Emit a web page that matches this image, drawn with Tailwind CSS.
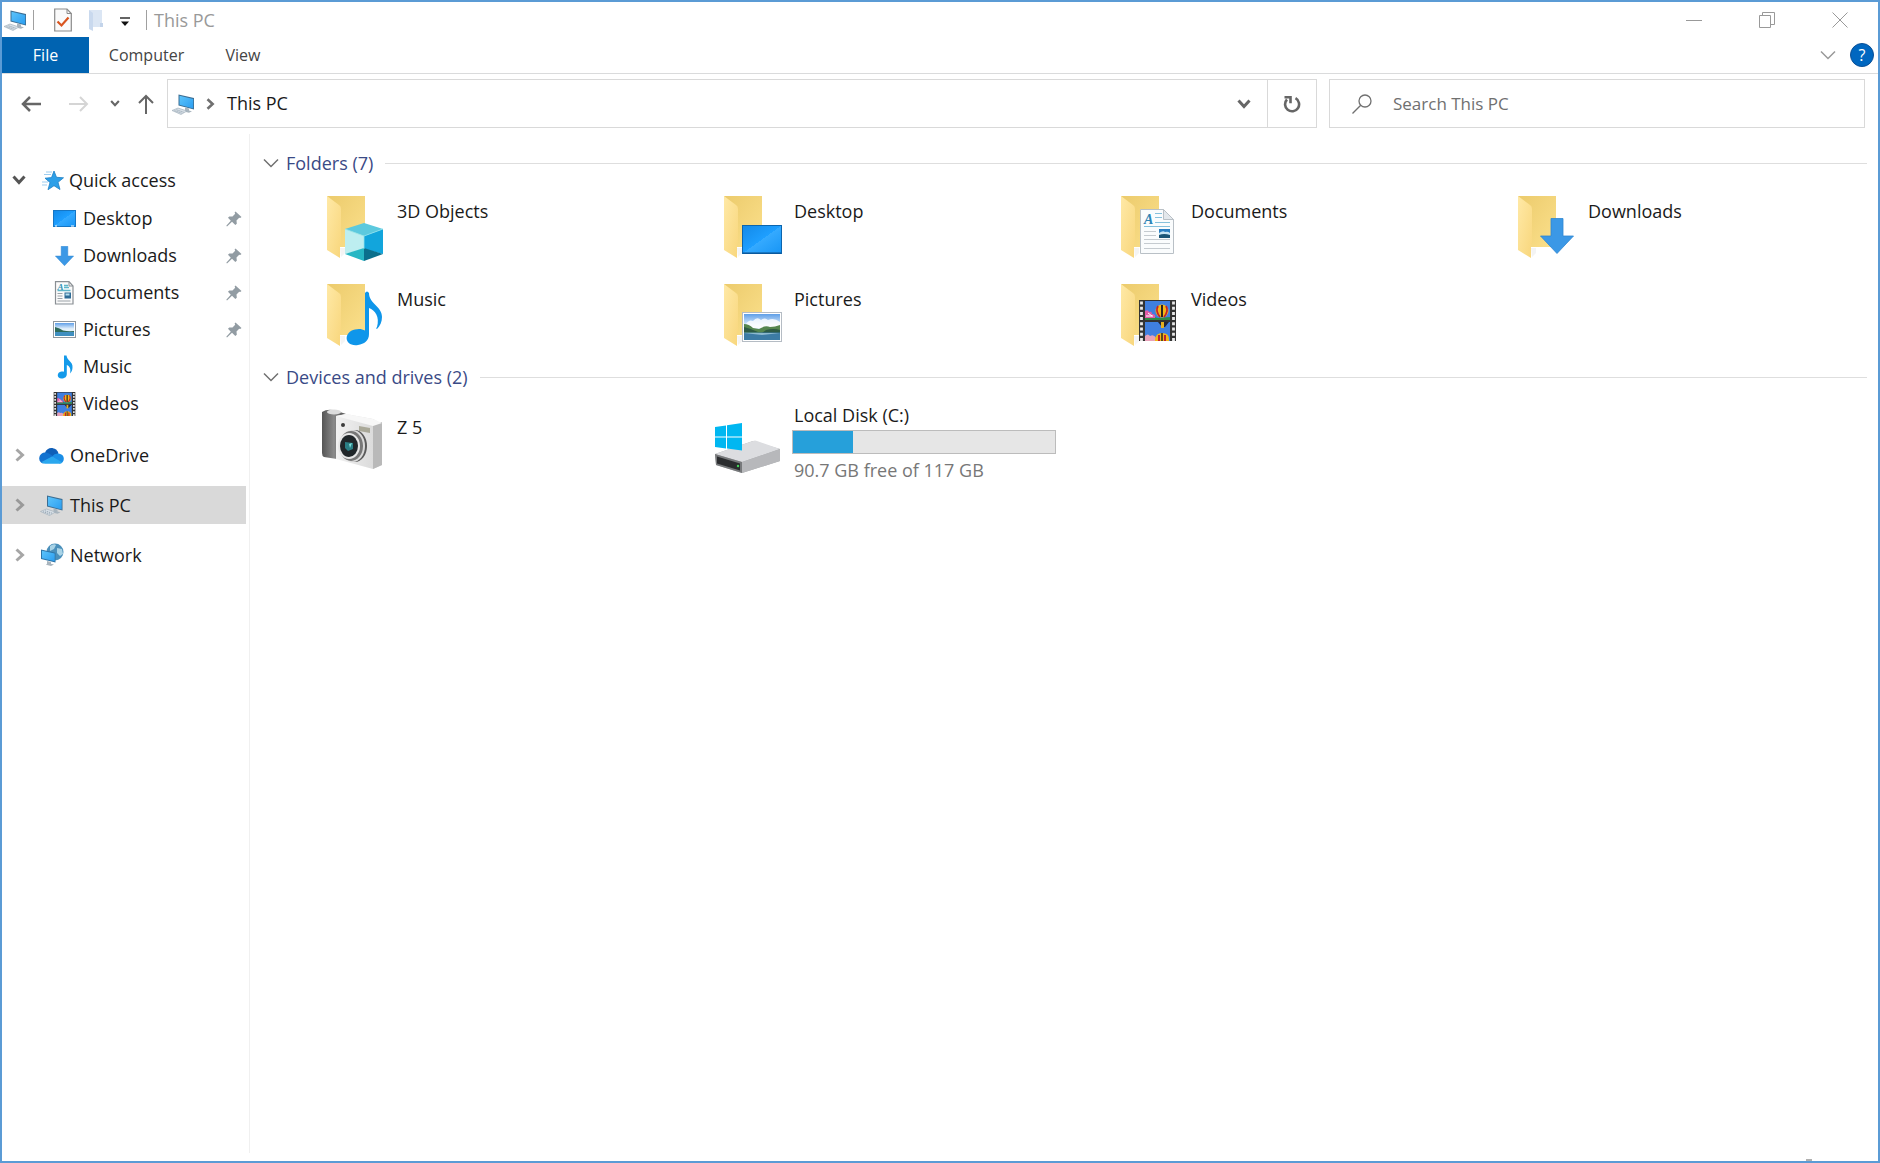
<!DOCTYPE html>
<html lang="en">

<head>
  <meta charset="UTF-8" />
  <meta name="viewport" content="width=device-width, initial-scale=1" />
  <title>This PC</title>
  <script src="https://cdn.jsdelivr.net/npm/@tailwindcss/browser@4"></script>
</head>

<body class="font-['Open_Sans','Noto_Sans',sans-serif] min-h-screen flex flex-col bg-white border-2 border-[#5b9bd5] text-[#1a1a1a]">

  <!-- Shared icons -->
  <svg class="absolute size-0" aria-hidden="true">
    <defs>
      <linearGradient id="g-back" x1="0" y1="0" x2="1" y2="1">
        <stop offset="0" stop-color="#eccb6c" /><stop offset="1" stop-color="#fbe08c" />
      </linearGradient>
      <linearGradient id="g-flap" x1="0" y1="0" x2="1" y2="1">
        <stop offset="0" stop-color="#ffe9a6" /><stop offset="1" stop-color="#f8d67c" />
      </linearGradient>
      <linearGradient id="g-screen" x1="0" y1="0" x2="1" y2="1">
        <stop offset="0" stop-color="#1389e8" /><stop offset=".5" stop-color="#1e9fff" /><stop offset=".5" stop-color="#35aaff" /><stop offset="1" stop-color="#1795f5" />
      </linearGradient>
      <linearGradient id="g-pc" x1="0" y1="0" x2="1" y2="1">
        <stop offset="0" stop-color="#5cc4fb" /><stop offset="1" stop-color="#2b9df0" />
      </linearGradient>
      <linearGradient id="g-sky" x1="0" y1="0" x2="0" y2="1">
        <stop offset="0" stop-color="#5f9fe8" /><stop offset=".45" stop-color="#e4f1fb" />
      </linearGradient>
      <linearGradient id="g-grip">
        <stop offset="0" stop-color="#555" /><stop offset=".5" stop-color="#8a8a8a" /><stop offset="1" stop-color="#4c4c4c" />
      </linearGradient>
      <linearGradient id="g-body">
        <stop offset="0" stop-color="#f1f1f1" /><stop offset="1" stop-color="#d6d6d6" />
      </linearGradient>
    </defs>
    <symbol id="folder" viewBox="0 0 64 72">
      <path d="M6 4H44V55H19Z" fill="url(#g-back)" />
      <path d="M19 56h5v5l-4 4z" fill="#f4f4f4" />
      <path d="M6 4l12 9q2 1 2 4v32q0 2-1 4v13L6 58z" fill="url(#g-flap)" />
    </symbol>
    <symbol id="pc" viewBox="0 0 24 24">
      <path d="M7.500 2.500L23 6V17.500L7.500 13.500z" fill="#3b6d92" />
      <path d="M8.500 3.700L22.200 6.900V16.400L8.500 12.800z" fill="url(#g-pc)" />
      <path d="M14 15.500l4 1v2l3 .8-3 1.500-5-1.300 1-.8z" fill="#a9b5be" />
      <path d="M1 18.500L7 16l9 3-6 3.500z" fill="#d7dfe6" stroke="#9aa9b5" stroke-width=".6" />
      <path d="M3.500 18.700l7 2.400M5.500 17.800l7 2.400" stroke="#8a9aa8" stroke-width=".8" stroke-dasharray="1.300 .8" />
    </symbol>
    <symbol id="landscape" viewBox="0 0 40 30">
      <rect x=".5" y=".5" width="39" height="29" fill="#fff" stroke="#b5bcc4" />
      <rect x="2" y="2" width="36" height="26" fill="url(#g-sky)" />
      <path d="M4 12q3-5 7-3 4-5 8-1 4-3 7 0 6-3 12 2v6H4z" fill="#fff" opacity=".8" />
      <path d="M2 12q5 0 9 4l6 1q6-4 11-2 5 0 10-2v9H2z" fill="#55864f" />
      <path d="M2 15q8 2 14 5H2zM24 18q8-2 14 0v3H20z" fill="#2d5a44" />
      <rect x="2" y="20.500" width="36" height="7.500" fill="#3c7ba4" />
      <path d="M2 21h36l-18 2z" fill="#8db9cf" />
    </symbol>
    <symbol id="film" viewBox="0 0 37 41">
      <rect width="37" height="41" fill="#333" />
      <path d="M2.500 1.500V41M34.500 1.500V41" stroke="#e9e9e9" stroke-width="2.800" stroke-dasharray="3 2.200" />
      <rect x="6" y="1" width="25" height="19" fill="#3f7fe0" />
      <rect x="6" y="22" width="25" height="19" fill="#3f7fe0" />
      <path d="M6 17l5-1 8 2 12-1v3H6z" fill="#2f8a45" />
      <path d="M6 11q3-2 4 1 3-1 3 2 4 0 3 4H6z" fill="#e25ca6" />
      <path d="M9 13l4 3M7 16h7" stroke="#fff" />
      <circle cx="23" cy="11" r="6.500" fill="#f3b616" />
      <path d="M19 6q-3 5 2 11M27 6q3 5-2 11" fill="none" stroke="#c3212c" stroke-width="1.800" />
      <path d="M23 5v12" stroke="#2a2320" stroke-width="2" />
      <path d="M19 22h11l-4 5h-3z" fill="#22243b" />
      <path d="M22 22h3v6h-3z" fill="#e5b021" />
      <path d="M6 36q3-3 5 0 4-2 6 2l1 3H6z" fill="#e8a1b8" />
      <path d="M16 39q1-6 7-6 7 0 7 6v2H16z" fill="#f3b616" />
      <path d="M20 35v6M26 35v6" stroke="#c3212c" stroke-width="2" />
      <path d="M23 33v8" stroke="#2a2320" stroke-width="1.500" />
    </symbol>
    <symbol id="arrow-down" viewBox="0 0 34 36">
      <path d="M11 .500H23V18H33.500L17 35.500.500 18H11z" fill="#3b98e6" stroke="#2f86d0" stroke-width=".8" />
    </symbol>
    <symbol id="pin" viewBox="0 0 16 16">
      <path d="M9.500.500L15.500 6l-1.300 1-1-.3-2.700 2.800.3 3.200-1.500 1.300-3.300-3.300L1 15.500l-.7-.7L4.800 9.800 2 6.800l1.300-1.400 3.200.2L9.200 2.700 8.600 1.500z" fill="#929ca3" />
    </symbol>
    <symbol id="chev" viewBox="0 0 14 10">
      <path d="M1.500 1.500L7 7.500l5.500-6" fill="none" stroke="currentColor" stroke-width="3" />
    </symbol>
    <symbol id="chev-thin" viewBox="0 0 16 10">
      <path d="M1 1.500L8 8.500l7-7" fill="none" stroke="currentColor" stroke-width="1.500" />
    </symbol>
    <symbol id="chev-right" viewBox="0 0 10 14">
      <path d="M1.500 1.500L7.500 7l-6 5.500" fill="none" stroke="currentColor" stroke-width="3" />
    </symbol>
  </svg>

  <!-- Title bar -->
  <header class="flex h-[35px] items-center justify-between">
    <div class="flex items-center">
      <svg class="ml-px size-6"><use href="#pc" /></svg>
      <span class="ml-[6px] h-5 w-px bg-[#a0a0a0]"></span>
      <button class="ml-5 w-[18px]" aria-label="Properties">
        <svg class="h-6 w-[18px]" viewBox="0 0 18 24">
          <path d="M.700 1H13l4.300 4.500V23H.700z" fill="#fafafa" stroke="#8b8b8b" stroke-width="1.200" />
          <path d="M13 1v4.500h4.300" fill="none" stroke="#8b8b8b" />
          <path d="M3.500 13.500l4 4 7-8" fill="none" stroke="#d9541e" stroke-width="2.200" />
        </svg>
      </button>
      <button class="ml-4 w-4" aria-label="New folder">
        <svg class="h-6 w-4" viewBox="0 0 16 24">
          <path d="M1 2h13v17H5z" fill="#dbe6f4" />
          <path d="M1 2l4 3v18l-4-2z" fill="#c9d9ee" />
          <path d="M12 15h3v4h-3z" fill="#c3d4ea" />
        </svg>
      </button>
      <button class="ml-4 w-[10px] pt-1" aria-label="Customize Quick Access Toolbar">
        <svg class="h-[10px] w-[10px]" viewBox="0 0 10 10">
          <path d="M0 1h10" stroke="#222" stroke-width="1.400" />
          <path d="M1 4.500h8L5 9z" fill="#111" />
        </svg>
      </button>
      <span class="ml-4 h-5 w-px bg-[#a0a0a0]"></span>
      <h1 class="ml-[7px] text-[18px] leading-6 text-[#999]">This PC</h1>
    </div>
    <div class="flex items-center pr-[2px] text-[#999]">
      <button class="flex w-[73px] justify-center" aria-label="Minimize">
        <svg class="size-4" viewBox="0 0 16 16"><path d="M0 8.500h16" stroke="currentColor" /></svg>
      </button>
      <button class="flex w-[73px] justify-center" aria-label="Restore">
        <svg class="size-4" viewBox="0 0 16 16" fill="none" stroke="currentColor">
          <path d="M.500 3.500h11v12H.500zM3.500 3V.500h12v12H12" />
        </svg>
      </button>
      <button class="flex w-[73px] justify-center" aria-label="Close">
        <svg class="size-4" viewBox="0 0 16 16"><path d="M.500.500l15 15M15.500.500l-15 15" stroke="currentColor" /></svg>
      </button>
    </div>
  </header>

  <!-- Ribbon tabs -->
  <nav class="flex h-[37px] items-stretch justify-between border-b border-[#dadbdc] text-base text-[#444]">
    <div class="flex">
      <button class="w-[87px] bg-[#0063b1] text-white">File</button>
      <button class="w-[115px]">Computer</button>
      <button class="w-[78px]">View</button>
    </div>
    <div class="flex items-center gap-[14px] pr-1">
      <button aria-label="Expand the ribbon"><svg class="h-[10px] w-4 text-[#999]"><use href="#chev-thin" /></svg></button>
      <button class="flex size-6 items-center justify-center rounded-full border border-[#0a4f96] bg-[#0067c0] text-base text-white" aria-label="Help">?</button>
    </div>
  </nav>

  <!-- Address bar -->
  <div class="flex items-center gap-3 pt-[5px] pr-[13px]">
    <div class="flex flex-1 items-center">
      <div class="flex w-[165px] items-center pl-[19px] text-[#666]">
        <button aria-label="Back">
          <svg class="h-4 w-5" viewBox="0 0 20 16" fill="none" stroke="currentColor" stroke-width="2.500"><path d="M20 8H2M9 1L2 8l7 7" /></svg>
        </button>
        <button class="ml-7 text-[#d5d5d5]" aria-label="Forward">
          <svg class="h-4 w-5" viewBox="0 0 20 16" fill="none" stroke="currentColor" stroke-width="2"><path d="M0 8h18M11 1l7 7-7 7" /></svg>
        </button>
        <button class="ml-[21px]" aria-label="Recent locations"><svg class="h-[7px] w-[10px]"><use href="#chev" /></svg></button>
        <button class="ml-[18px]" aria-label="Up">
          <svg class="h-5 w-4" viewBox="0 0 16 20" fill="none" stroke="currentColor" stroke-width="2"><path d="M8 20V2M1 9l7-7 7 7" /></svg>
        </button>
      </div>
      <div class="flex h-[49px] flex-1 items-center border border-[#d9d9d9]">
        <svg class="ml-[3px] size-6"><use href="#pc" /></svg>
        <svg class="ml-[11px] h-[12px] w-[9px] text-[#707070]"><use href="#chev-right" /></svg>
        <a href="#" class="ml-3 flex-1 text-[18px]">This PC</a>
        <button class="mr-4 text-[#666]" aria-label="Previous locations"><svg class="h-[10px] w-[14px]"><use href="#chev" /></svg></button>
        <button class="flex h-full w-[49px] items-center justify-center border-l border-[#d9d9d9] text-[#666]" aria-label="Refresh">
          <svg class="size-[18px]" viewBox="0 0 18 18" fill="none" stroke="currentColor" stroke-width="2.600">
            <path d="M12.500 3.200A7 7 0 1 1 4 4.500M1.500 2.200h6v6" />
          </svg>
        </button>
      </div>
    </div>
    <label class="flex h-[49px] w-[536px] items-center border border-[#d9d9d9] pl-[22px] text-[#707070]">
      <svg class="size-5" viewBox="0 0 20 20" fill="none" stroke="currentColor" stroke-width="1.300">
        <circle cx="13" cy="7" r="6" /><path d="M8.700 11.300L.500 19.500" />
      </svg>
      <input type="search" aria-label="Search This PC" placeholder="Search This PC" class="ml-[21px] flex-1 text-[17px] outline-none placeholder:text-[#707070]" />
    </label>
  </div>

  <div class="flex flex-1 pt-[6px]">

    <!-- Navigation pane -->
    <aside class="mb-2 w-[248px] border-r border-[#f0f0f0] pt-[26px] pr-[3px] text-[18px]">
      <ul class="flex flex-col gap-3">
        <li>
          <a href="#" class="flex h-10 items-center pl-[10px]">
            <svg class="h-[10px] w-[14px] text-[#555]"><use href="#chev" /></svg>
            <svg class="ml-4 h-[22px] w-[22px]" viewBox="0 0 22 22">
              <path d="M12 2l2.500 6.300 7 .5-5.500 4.500L18 20.500l-6-3.800-6 4 2-7.200L3 9.200l6.500-.6z" fill="#2c9fe8" stroke="#1c7fc4" stroke-width=".8" />
              <path d="M4 3h6M2 5.500h7M0 13h6M0 16h5" stroke="#9dcdf0" stroke-width="1" />
            </svg>
            <span class="ml-[5px]">Quick access</span>
          </a>
          <ul class="pb-[2px]">
            <li>
              <a href="#" class="flex h-[37px] items-center pr-1 pl-[51px]">
                <svg class="h-[18px] w-[23px]" viewBox="0 0 23 18"><rect x=".5" y=".5" width="22" height="16" fill="url(#g-screen)" stroke="#1676c4" /><path d="M2 16h2M18 16h3" stroke="#fff" /></svg>
                <span class="ml-[7px] flex-1">Desktop</span>
                <svg class="size-4"><use href="#pin" /></svg>
              </a>
            </li>
            <li>
              <a href="#" class="flex h-[37px] items-center pr-1 pl-[51px]">
                <svg class="h-5 w-[23px]"><use href="#arrow-down" /></svg>
                <span class="ml-[7px] flex-1">Downloads</span>
                <svg class="size-4"><use href="#pin" /></svg>
              </a>
            </li>
            <li>
              <a href="#" class="flex h-[37px] items-center pr-1 pl-[51px]">
                <svg class="h-6 w-[23px]" viewBox="0 0 23 24">
                  <path d="M2.500.700H16L20 5v18H2.500z" fill="#fbfbfb" stroke="#8a8f94" stroke-width="1.200" />
                  <path d="M16 1v4h4" fill="none" stroke="#8a8f94" />
                  <text x="4.500" y="9" font-family="Liberation Serif" font-style="italic" font-weight="bold" font-size="9" fill="#3193b5">A</text>
                  <path d="M11 4.500h4M11 6.500h5M4.500 9.500h13" stroke="#5fb6c9" stroke-width="1.300" />
                  <path d="M4.500 12.500h5M4.500 15h5M4.500 17.500h5M4.500 20h13" stroke="#9aa1a7" />
                  <rect x="11.500" y="11.500" width="6.500" height="6" fill="#2f6c96" />
                  <path d="M12.500 12.500h4v2h-4z" fill="#b5dff0" />
                </svg>
                <span class="ml-[7px] flex-1">Documents</span>
                <svg class="size-4"><use href="#pin" /></svg>
              </a>
            </li>
            <li>
              <a href="#" class="flex h-[37px] items-center pr-1 pl-[51px]">
                <svg class="h-[17px] w-[23px]" viewBox="0 0 23 17">
                  <rect x=".5" y=".5" width="22" height="16" fill="#fff" stroke="#8f979e" />
                  <rect x="2" y="2" width="19" height="13" fill="url(#g-sky)" />
                  <path d="M2 6q5 1 8 3.500 5 1 11 .5v2H2z" fill="#2e6a5a" />
                  <rect x="2" y="11" width="19" height="4" fill="#3f8fc0" />
                </svg>
                <span class="ml-[7px] flex-1">Pictures</span>
                <svg class="size-4"><use href="#pin" /></svg>
              </a>
            </li>
            <li>
              <a href="#" class="flex h-[37px] items-center pr-1 pl-[51px]">
                <svg class="h-6 w-[23px]" viewBox="0 0 23 24"><path d="M11 .500h2.500c.5 5 6.500 6 6 12 0 2.500-1 4.500-2.500 6 1-4.500 0-7-3.200-8.500V19c0 3-2.300 4.500-5.300 4.500-5 0-5-6.500 0-7 1-.2 2 0 2.500.2z" fill="#149aea" /></svg>
                <span class="ml-[7px]">Music</span>
              </a>
            </li>
            <li>
              <a href="#" class="flex h-[37px] items-center pr-1 pl-[51px]">
                <svg class="h-6 w-[23px]"><use href="#film" /></svg>
                <span class="ml-[7px]">Videos</span>
              </a>
            </li>
          </ul>
        </li>
        <li>
          <a href="#" class="flex h-[38px] items-center pl-[13px]">
            <svg class="h-[14px] w-[10px] text-[#a6a6a6]"><use href="#chev-right" /></svg>
            <svg class="ml-[14px] h-[17px] w-[25px]" viewBox="0 0 25 17">
              <path d="M6 5.500C8 1 12.500-.500 17 2.500q2 1.500 2.500 4L12 12z" fill="#0f5fb8" />
              <path d="M5.500 5.500q5 0 9 4.500L4 16.500C-1.500 15-1 6.500 5.500 5.500z" fill="#1272d0" />
              <path d="M13 9.500q3-4 7.500-2.800c6 1 5.500 9.300 0 9.800z" fill="#1b8ee6" />
              <path d="M2.500 15l10.500-5.500L23.500 15.500q-1.500 1.300-3 1.300H6q-2.500 0-3.500-1.800z" fill="#2aa7ee" />
            </svg>
            <span class="ml-[6px]">OneDrive</span>
          </a>
        </li>
        <li>
          <a href="#" class="flex h-[38px] items-center bg-[#d9d9d9] pl-[13px]" aria-current="page">
            <svg class="h-[14px] w-[10px] text-[#999]"><use href="#chev-right" /></svg>
            <svg class="ml-[14px] h-6 w-[25px]"><use href="#pc" /></svg>
            <span class="ml-[6px]">This PC</span>
          </a>
        </li>
        <li>
          <a href="#" class="flex h-[38px] items-center pl-[13px]">
            <svg class="h-[14px] w-[10px] text-[#a6a6a6]"><use href="#chev-right" /></svg>
            <svg class="ml-[14px] h-6 w-[25px]" viewBox="0 0 25 24">
              <circle cx="16" cy="9" r="8.500" fill="#4b90bb" />
              <path d="M11 3q4-3 6-1l-2 4-4 2zM18 5l5 1 1 5-3 2-3-3z" fill="#a9d3e6" />
              <path d="M2 6.500l14.500 3.200V19.500L2 16z" fill="#2c74a8" />
              <path d="M3 7.700l12.700 2.800V18.300L3 15.200z" fill="url(#g-pc)" />
              <path d="M8 18l4 1v1.800l3 .8-3 1.400-5-1.300 1-1z" fill="#a9b5be" />
            </svg>
            <span class="ml-[6px]">Network</span>
          </a>
        </li>
      </ul>
    </aside>

    <!-- Content -->
    <main class="flex flex-1 flex-col pt-[15px] pr-[11px] pl-[13px] text-[18px]">
      <section>
        <h2 class="flex h-7 items-center text-[#3a4a86]">
          <svg class="h-[10px] w-4 text-[#707070]"><use href="#chev-thin" /></svg>
          <button class="ml-[7px]">Folders (7)</button>
          <span class="ml-3 h-px flex-1 bg-[#dedede]"></span>
        </h2>
        <div class="-mr-[11px] grid grid-cols-[repeat(auto-fill,397px)] gap-y-4 pt-[15px] pl-[18px]">
          <a href="#" class="flex gap-3 pl-10">
            <svg class="h-[72px] w-16" viewBox="0 0 64 72">
              <use href="#folder" />
              <path d="M24 37l19-6 19 6-19 7z" fill="#5cc9de" />
              <path d="M24 37l19 7v13l-19 5z" fill="#bdeef0" />
              <path d="M62 37l-19 7v13l19 5z" fill="#12a5dc" />
              <path d="M24 62l19-6v13z" fill="#27b7c4" />
              <path d="M62 62l-19-6v13z" fill="#0b6f8c" />
              <path d="M24 37l19 7 19-7M43 44v13" fill="none" stroke="#8fe3ee" stroke-width=".8" />
            </svg>
            <span class="pt-[7px] leading-6">3D Objects</span>
          </a>
          <a href="#" class="flex gap-3 pl-10">
            <svg class="h-[72px] w-16" viewBox="0 0 64 72">
              <use href="#folder" />
              <rect x="24.500" y="33.500" width="39" height="28" fill="url(#g-screen)" stroke="#0b65ae" />
              <path d="M25 61h38" stroke="#0a4f8c" />
            </svg>
            <span class="pt-[7px] leading-6">Desktop</span>
          </a>
          <a href="#" class="flex gap-3 pl-10">
            <svg class="h-[72px] w-16" viewBox="0 0 64 72">
              <use href="#folder" />
              <path d="M25.500 17.500H48.500L58.500 27.500V61.500H25.500z" fill="#fafcfd" stroke="#b9c0c6" />
              <path d="M48.500 17.500v10h10z" fill="#e3e8ec" stroke="#b9c0c6" />
              <text x="29" y="32" font-family="Liberation Serif" font-style="italic" font-weight="bold" font-size="14" fill="#2e84b5">A</text>
              <path d="M40 21.500h7M40 25.500h7M40 30.500h15M29 34.500h26" stroke="#86c1dc" />
              <path d="M29 39.500h12M29 43.500h12M29 47.500h26M29 51.500h26M29 56.500h26" stroke="#c5cbd0" />
              <rect x="44" y="37" width="11" height="9" fill="#2a7fc2" />
              <path d="M44 41q4-3 6-1 3-1 5 1v2H44z" fill="#c7e5f5" />
              <path d="M44 43q5-2 11 0v3H44z" fill="#1b5576" />
            </svg>
            <span class="pt-[7px] leading-6">Documents</span>
          </a>
          <a href="#" class="flex gap-3 pl-10">
            <svg class="h-[72px] w-16" viewBox="0 0 64 72">
              <use href="#folder" />
              <use href="#arrow-down" x="28" y="26" width="34" height="36" />
            </svg>
            <span class="pt-[7px] leading-6">Downloads</span>
          </a>
          <a href="#" class="flex gap-3 pl-10">
            <svg class="h-[72px] w-16" viewBox="0 0 64 72">
              <use href="#folder" />
              <path d="M44 13q2-3 4 0c0 11 13 13 13 24 0 5-2 9-5 12-1 0-1-1 0-2 3-10-2-17-8-19v26c0 7-5 10-11 11-14 2-15-13-3-15.500 4-1 7-.5 10 1z" fill="#0f96ea" />
            </svg>
            <span class="pt-[7px] leading-6">Music</span>
          </a>
          <a href="#" class="flex gap-3 pl-10">
            <svg class="h-[72px] w-16" viewBox="0 0 64 72">
              <use href="#folder" />
              <use href="#landscape" x="24" y="32" width="40" height="30" />
            </svg>
            <span class="pt-[7px] leading-6">Pictures</span>
          </a>
          <a href="#" class="flex gap-3 pl-10">
            <svg class="h-[72px] w-16" viewBox="0 0 64 72">
              <use href="#folder" />
              <use href="#film" x="24" y="20" width="37" height="41" />
            </svg>
            <span class="pt-[7px] leading-6">Videos</span>
          </a>
        </div>
      </section>

      <section class="pt-[11px]">
        <h2 class="flex h-7 items-center text-[#3a4a86]">
          <svg class="h-[10px] w-4 text-[#707070]"><use href="#chev-thin" /></svg>
          <button class="ml-[7px]">Devices and drives (2)</button>
          <span class="ml-3 h-px flex-1 bg-[#dedede]"></span>
        </h2>
        <div class="-mr-[11px] grid grid-cols-[repeat(auto-fill,397px)] pt-3 pl-[18px]">
          <a href="#" class="flex gap-3 pl-10">
            <svg class="h-[72px] w-16" viewBox="0 0 64 72">
              <path d="M1 9q6-4 15-1l9 3-9 3v42L3 54q-2-1-2-4z" fill="url(#g-grip)" />
              <ellipse cx="13" cy="9" rx="7" ry="2.500" fill="#dcdcdc" />
              <path d="M15 13l10-2 27 5 9 5v41l-9 4-37-10z" fill="url(#g-body)" />
              <path d="M52 22l9-3v43l-9 4z" fill="#b9b9b9" />
              <path d="M15 13l10-2 27 5 9 4-9 3z" fill="#f7f7f7" />
              <circle cx="22" cy="22" r="2" fill="#3c3c3c" />
              <path d="M38 23l11 2v5l-11-2z" fill="#a9a898" />
              <ellipse cx="34" cy="43" rx="12" ry="16" fill="#5a5a5a" />
              <ellipse cx="32" cy="43" rx="12" ry="16" fill="#d9d9d9" />
              <ellipse cx="30" cy="43" rx="12" ry="15" fill="#777" />
              <ellipse cx="28" cy="43" rx="11" ry="13" fill="#e6e6e6" />
              <ellipse cx="28" cy="43" rx="9" ry="11" fill="#202629" />
              <path d="M24 39l8 1v6l-5 2-3-3z" fill="#2a7e84" />
              <path d="M28 41l3-1-2 5z" fill="#7ee0d8" />
            </svg>
            <span class="pt-3 leading-6">Z 5</span>
          </a>
          <a href="#" class="flex gap-3 pl-10">
            <svg class="h-[72px] w-16 overflow-visible" viewBox="0 0 64 72">
              <path d="M-3 51L35 38l27 8v12L24 70l-26-8z" fill="#a9abad" />
              <path d="M-3 51L35 38q2-1 4 0l23 8-38 13z" fill="#dcdde0" />
              <path d="M24 59l38-13v12L24 70z" fill="#b7b8bb" />
              <path d="M-3 51l27 8v11L-2 62z" fill="#77797b" />
              <path d="M-1 53.500l23 7v7L-1 60.500z" fill="#2a2c2e" />
              <circle cx="20" cy="63" r="1.200" fill="#45d35a" />
              <path d="M-3 24l11-1.500V33.500H-3zM9 22.300L24 20v13.500H9zM-3 34.500H8V45.500L-3 44zM9 34.500H24V47.500L9 45.600z" fill="#00b7f1" />
            </svg>
            <div class="w-[262px]">
              <p class="leading-6">Local Disk (C:)</p>
              <div class="mt-[3px] -ml-[2px] h-6 border border-[#bcbcbc] bg-[#e6e6e6]" role="progressbar" aria-label="Space used" aria-valuenow="23" aria-valuemin="0" aria-valuemax="100">
                <div class="h-full bg-[#26a0da]" style="width: 23%"></div>
              </div>
              <p class="mt-1 leading-6 text-[#777]">90.7 GB free of 117 GB</p>
            </div>
          </a>
        </div>
      </section>

      <!-- Top edge of the view switcher -->
      <div class="mt-auto mr-[55px] h-[2px] w-[6px] self-end bg-[#b0b0b0]"></div>
    </main>
  </div>

</body>

</html>
